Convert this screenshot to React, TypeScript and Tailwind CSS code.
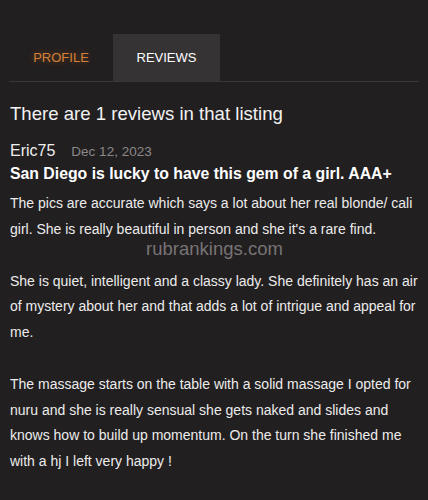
export default function App() {
  const paragraphs = [
    "The pics are accurate which says a lot about her real blonde/ cali girl. She is really beautiful in person and she it's a rare find.",
    "She is quiet, intelligent and a classy lady. She definitely has an air of mystery about her and that adds a lot of intrigue and appeal for me.",
    "The massage starts on the table with a solid massage I opted for nuru and she is really sensual she gets naked and slides and knows how to build up momentum. On the turn she finished me with a hj I left very happy !",
  ]

  return (
    <div className="min-h-[500px] bg-[#221f20] text-white font-['Liberation_Sans',Arial,sans-serif] px-[9px] pt-[34px]">
      <div className="flex border-b border-[#3a3738]">
        <button className="w-[104px] h-[47px] text-[13px] text-[#d4803a] [text-shadow:0_0_6px_rgba(217,120,40,0.45)]">
          PROFILE
        </button>
        <button className="w-[107px] h-[47px] text-[13px] text-white bg-[#363334]">REVIEWS</button>
      </div>

      <h2 className="pl-px mt-[20px] text-[18.6px] leading-[24px] text-[#f2f2f2]">
        There are 1 reviews in that listing
      </h2>

      <div className="pl-px mt-[14px]">
        <div className="flex items-baseline gap-[16px]">
          <span className="text-[16px] leading-[22px] text-[#eeeeee]">Eric75</span>
          <span className="text-[13.5px] text-[#8a8889]">Dec 12, 2023</span>
        </div>
        <h3 className="mt-[1px] text-[15.8px] leading-[22px] font-bold text-white">
          San Diego is lucky to have this gem of a girl. AAA+
        </h3>
        <div className="relative mt-[6px] text-[14px] leading-[25.8px] text-[#ececec]">
          {paragraphs.map((p, i) => (
            <p key={i} className={i > 0 ? "mt-[25.8px]" : ""}>
              {p}
            </p>
          ))}
          <span className="absolute left-0 right-0 top-[47px] text-center text-[18.5px] leading-[22px] text-[#777475] pointer-events-none">
            rubrankings.com
          </span>
        </div>
      </div>
    </div>
  )
}
